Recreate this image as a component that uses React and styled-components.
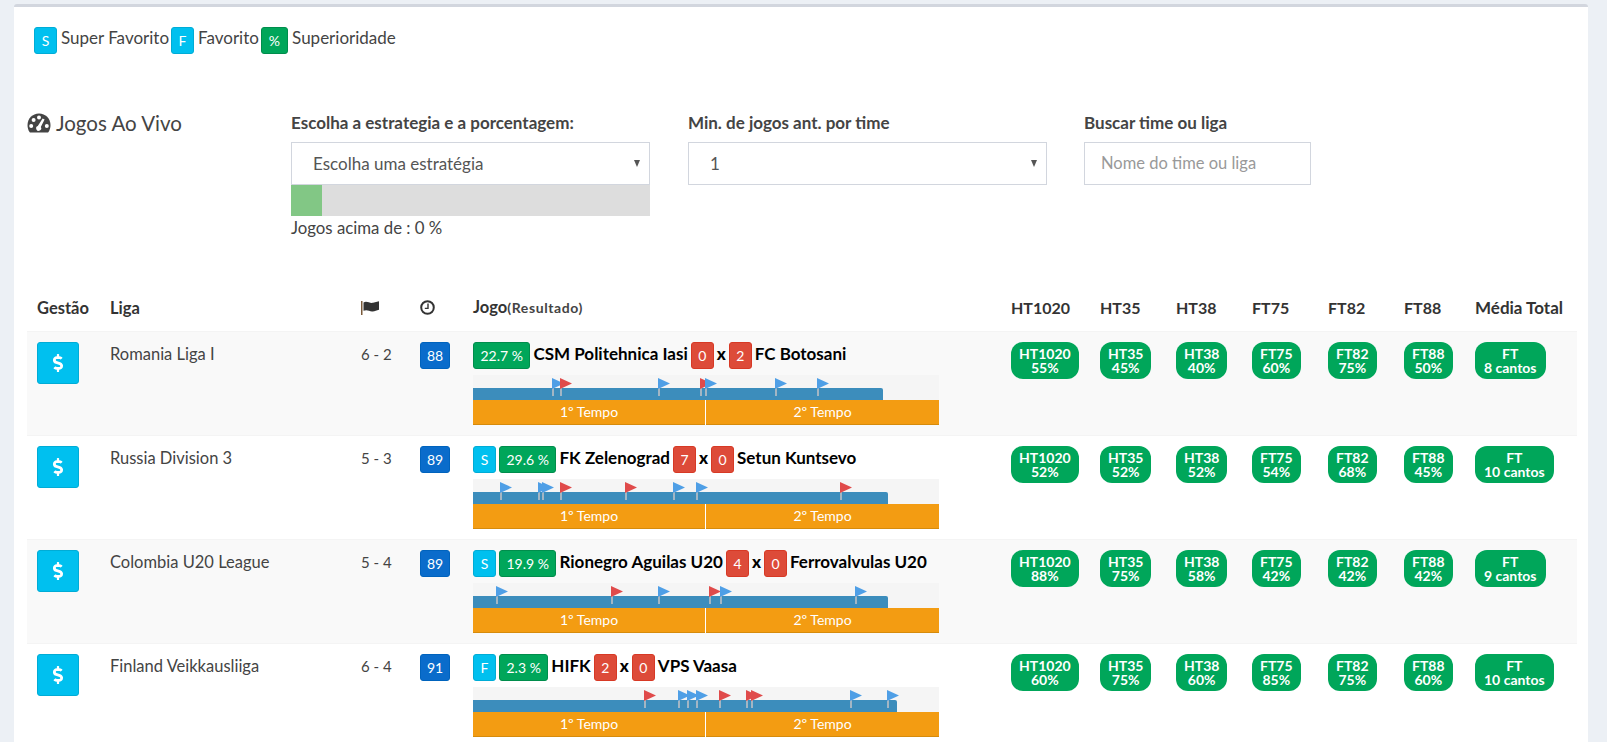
import React from 'react'
import styled, { createGlobalStyle } from 'styled-components'
import { FaDollarSign } from 'react-icons/fa'

const GlobalStyle = createGlobalStyle`
  html, body {
    margin: 0;
    height: 742px;
    overflow: hidden;
    background: #ecf0f5;
    font-family: Lato, "Liberation Sans", sans-serif;
    font-size: 16px;
    color: #333;
  }
`

const green = '#00a65a'
const cyan = '#00c0ef'
const red = '#dd4b39'
const columns = '73px 251px 59px 53px 538px 89px 76px 76px 76px 76px 71px 112px'

const Panel = styled.div`
  margin: 4px 19px 0 14px;
  height: 738px;
  box-sizing: border-box;
  background: #fff;
  border-top: 3px solid #d2d6de;
  border-radius: 3px 3px 0 0;
  padding: 20px 11px 0 13px;
  overflow: hidden;
`

const Legend = styled.div`
  display: flex;
  align-items: flex-start;
  height: 27px;
  padding-left: 7px;
  font-size: 17px;
  line-height: 22px;
  color: #444;
`

const LegendText = styled.span`
  margin: 0 2px 0 4px;
`

const Tag = styled.span`
  display: inline-block;
  box-sizing: border-box;
  height: 27px;
  min-width: 23px;
  padding: 0 ${props => props.$pad || 6}px;
  border-radius: 3px;
  border: 1px solid ${props => props.$color === 'green' ? '#008d4c' : props.$color === 'red' ? '#d73925' : '#00acd6'};
  background: ${props => props.$color === 'green' ? green : props.$color === 'red' ? red : cyan};
  color: #fff;
  font-size: 14px;
  font-weight: 400;
  line-height: 25px;
  text-align: center;
  white-space: nowrap;
`

const Filters = styled.div`
  display: flex;
  margin-top: 57px;
  height: 180px;
`

const Title = styled.h3`
  display: flex;
  align-items: center;
  gap: 5px;
  width: 264px;
  height: 24px;
  margin: 0;
  font-size: 20.5px;
  font-weight: 400;
  color: #444;
`

const Field = styled.div`
  width: ${props => props.$width}px;
  margin-right: ${props => props.$gap || 37}px;
`

const Label = styled.label`
  display: block;
  height: 24px;
  margin-bottom: 7px;
  font-size: 17px;
  font-weight: 700;
  line-height: 24px;
  color: #444;
  white-space: nowrap;
`

const SelectBox = styled.div`
  position: relative;
  box-sizing: border-box;
  height: 43px;
  padding: 0 21px;
  border: 1px solid #d2d6de;
  font-size: 17px;
  line-height: 41px;
  color: #555;
  &::after {
    content: '';
    position: absolute;
    right: 9px;
    top: 17px;
    border-left: 3.5px solid transparent;
    border-right: 3.5px solid transparent;
    border-top: 7px solid #555;
  }
`

const Input = styled.div`
  box-sizing: border-box;
  height: 43px;
  padding: 0 16px;
  border: 1px solid #d2d6de;
  font-size: 16.5px;
  line-height: 41px;
  color: #999;
`

const Progress = styled.div`
  height: 31px;
  background: #ddd;
`

const ProgressFill = styled.div`
  height: 100%;
  background: #82c785;
`

const Hint = styled.div`
  font-size: 16.8px;
  line-height: 24px;
  color: #444;
`

const Row = styled.div`
  display: grid;
  grid-template-columns: ${columns};
  box-sizing: border-box;
  height: 104px;
  padding-top: 10px;
  border-top: 1px solid #f4f4f4;
  background: ${props => props.$striped ? '#f9f9f9' : '#fff'};
`

const HeadRow = styled.div`
  display: grid;
  grid-template-columns: ${columns};
  box-sizing: border-box;
  height: 40px;
  padding-bottom: 7px;
  align-items: center;
  font-weight: 700;
  color: #333;
`

const HeadCell = styled.div`
  padding-left: 10px;
  white-space: nowrap;
  font-size: ${props => props.$size || 16.5}px;
  line-height: 22px;
  small { font-size: 14px; letter-spacing: 0.6px; color: #444; }
  svg { display: block; }
`

const Cell = styled.div`
  padding-left: 10px;
  min-width: 0;
`

const PlainCell = styled(Cell)`
  padding-top: 1px;
  font-size: ${props => props.$size || 16.5}px;
  line-height: 22px;
  color: #444;
`

const MoneyButton = styled.div`
  display: flex;
  align-items: center;
  justify-content: center;
  box-sizing: border-box;
  width: 42px;
  height: 42px;
  border-radius: 3px;
  border: 1px solid #00acd6;
  background: ${cyan};
  color: #fff;
  font-size: 18px;
`

const Minute = styled.div`
  box-sizing: border-box;
  width: 30px;
  height: 27px;
  border-radius: 3px;
  border: 1px solid #0063bd;
  background: #0a6ccb;
  color: #fff;
  font-size: 14px;
  line-height: 25px;
  text-align: center;
`

const Match = styled.div`
  display: flex;
  align-items: flex-start;
  gap: 3px;
  height: 27px;
  font-size: 17px;
  font-weight: 700;
  line-height: 24px;
  color: #000;
  white-space: nowrap;
`

const Timeline = styled.div`
  position: relative;
  width: 466px;
  margin-top: 6px;
  padding-top: 13px;
  background: #f5f5f5;
`

const Played = styled.div`
  height: 12px;
  border-radius: 0 2px 0 0;
  background: #3c8dbc;
`

const Flag = styled.svg`
  position: absolute;
  top: 3px;
  margin-left: -1px;
  overflow: visible;
`

const Halves = styled.div`
  display: grid;
  grid-template-columns: 232px 1px 233px;
  background: #fff;
`

const Half = styled.div`
  height: 25px;
  box-sizing: border-box;
  border-bottom: 1px solid #d68b0c;
  background: #f39c12;
  color: #fff;
  font-size: 14px;
  line-height: 24px;
  text-align: center;
`

const Pill = styled.div`
  display: inline-block;
  padding: 5px ${props => props.$pad || 8}px 4px;
  border-radius: 12px;
  background: ${green};
  color: #fff;
  font-size: 14px;
  font-weight: 700;
  line-height: 14px;
  text-align: center;
  white-space: nowrap;
`

const heads = ['HT1020', 'HT35', 'HT38', 'FT75', 'FT82', 'FT88']

const games = [
  {
    liga: 'Romania Liga I', corners: '6 - 2', minute: 88, pct: '22.7 %',
    home: 'CSM Politehnica Iasi', away: 'FC Botosani', score: [0, 2], played: 410,
    flags: [[80, 'b'], [88, 'r'], [186, 'b'], [228, 'r'], [233, 'b'], [303, 'b'], [345, 'b']],
    odds: ['55%', '45%', '40%', '60%', '75%', '50%'], total: '8 cantos',
  },
  {
    liga: 'Russia Division 3', corners: '5 - 3', minute: 89, pct: '29.6 %', tag: 'S',
    home: 'FK Zelenograd', away: 'Setun Kuntsevo', score: [7, 0], played: 415,
    flags: [[28, 'b'], [66, 'b'], [70, 'b'], [88, 'r'], [153, 'r'], [201, 'b'], [224, 'b'], [368, 'r']],
    odds: ['52%', '52%', '52%', '54%', '68%', '45%'], total: '10 cantos',
  },
  {
    liga: 'Colombia U20 League', corners: '5 - 4', minute: 89, pct: '19.9 %', tag: 'S',
    home: 'Rionegro Aguilas U20', away: 'Ferrovalvulas U20', score: [4, 0], played: 415,
    flags: [[24, 'b'], [139, 'r'], [186, 'b'], [237, 'r'], [248, 'b'], [383, 'b']],
    odds: ['88%', '75%', '58%', '42%', '42%', '42%'], total: '9 cantos',
  },
  {
    liga: 'Finland Veikkausliiga', corners: '6 - 4', minute: 91, pct: '2.3 %', tag: 'F',
    home: 'HIFK', away: 'VPS Vaasa', score: [2, 0], played: 424,
    flags: [[172, 'r'], [206, 'b'], [215, 'b'], [224, 'b'], [247, 'r'], [274, 'r'], [279, 'r'], [378, 'b'], [415, 'b']],
    odds: ['60%', '75%', '60%', '85%', '75%', '60%'], total: '10 cantos',
  },
]

// font awesome 4 look, the packaged FA5 ones are too thin
const GaugeIcon = () => (
  <svg width="24" height="20" viewBox="0 0 24 20">
    <path d="M12 0.5 C5.5 0.5 0.5 5.5 0.5 12 C0.5 14.6 1.2 17 2.5 19 Q2.9 19.5 3.6 19.5 L20.4 19.5 Q21.1 19.5 21.5 19 C22.8 17 23.5 14.6 23.5 12 C23.5 5.5 18.5 0.5 12 0.5 Z" fill="#444" />
    <circle cx="4.2" cy="13" r="2" fill="#fff" />
    <circle cx="6.6" cy="7" r="2" fill="#fff" />
    <circle cx="12" cy="4.6" r="2" fill="#fff" />
    <circle cx="19.8" cy="13" r="2" fill="#fff" />
    <path d="M15.6 5.6 L17.6 6.4 L13.8 14 A2.5 2.5 0 1 1 10.8 13 Z" fill="#fff" />
  </svg>
)

const HeadFlag = () => (
  <svg width="19" height="14" viewBox="0 0 19 14">
    <rect x="0" y="0" width="1.5" height="14" fill="#7a5a3a" />
    <path d="M2.5 1.5 C6 -0.5 8.5 2.6 12 1.8 C14 1.3 16 0.6 18 0.2 L18 8.8 C15.5 9.6 13.5 10.6 11 10.4 C8 10.2 6 8.2 2.5 9.8 Z" fill="#333" />
  </svg>
)

const HeadClock = () => (
  <svg width="15" height="15" viewBox="0 0 15 15">
    <circle cx="7.5" cy="7.5" r="6.3" fill="none" stroke="#333" strokeWidth="2" />
    <path d="M8 3.6 V8.4 H4.8" fill="none" stroke="#333" strokeWidth="1.4" />
  </svg>
)

const PitchFlag = ({ left, color }) => (
  <Flag width="12" height="18" viewBox="0 0 12 18" style={{ left }}>
    <rect x="0" y="10" width="2" height="8" fill="#a3b6c4" />
    <path d="M0 0 L12 5.5 L0 11 Z" fill={color === 'r' ? '#e04b4b' : '#4f9fe6'} />
  </Flag>
)

const GameRow = ({ game, striped }) => (
  <Row $striped={striped}>
    <Cell><MoneyButton><FaDollarSign /></MoneyButton></Cell>
    <PlainCell>{game.liga}</PlainCell>
    <PlainCell $size={15}>{game.corners}</PlainCell>
    <Cell><Minute>{game.minute}</Minute></Cell>
    <Cell>
      <Match>
        {game.tag && <Tag>{game.tag}</Tag>}
        <Tag $color="green" $pad={6.5}>{game.pct}</Tag>
        {game.home}
        <Tag $color="red">{game.score[0]}</Tag>
        <b>x</b>
        <Tag $color="red">{game.score[1]}</Tag>
        {game.away}
      </Match>
      <Timeline>
        <Played style={{ width: game.played }} />
        {game.flags.map(([left, color], i) => <PitchFlag key={i} left={left} color={color} />)}
        <Halves>
          <Half>1º Tempo</Half>
          <span />
          <Half>2º Tempo</Half>
        </Halves>
      </Timeline>
    </Cell>
    {game.odds.map((odd, i) => (
      <Cell key={i}>
        <Pill>{heads[i]}<br />{odd}</Pill>
      </Cell>
    ))}
    <Cell><Pill $pad={9}>FT<br />{game.total}</Pill></Cell>
  </Row>
)

export default function App() {
  return (
    <>
      <GlobalStyle />
      <Panel>
        <Legend>
          <Tag>S</Tag><LegendText>Super Favorito</LegendText>
          <Tag>F</Tag><LegendText>Favorito</LegendText>
          <Tag $color="green" $pad={7}>%</Tag><LegendText>Superioridade</LegendText>
        </Legend>
        <Filters>
          <Title><GaugeIcon />Jogos Ao Vivo</Title>
          <Field $width={359} $gap={38}>
            <Label>Escolha a estrategia e a porcentagem:</Label>
            <SelectBox>Escolha uma estratégia</SelectBox>
            <Progress><ProgressFill style={{ width: '8.6%' }} /></Progress>
            <Hint>Jogos acima de : 0 %</Hint>
          </Field>
          <Field $width={359}>
            <Label>Min. de jogos ant. por time</Label>
            <SelectBox>1</SelectBox>
          </Field>
          <Field $width={227}>
            <Label>Buscar time ou liga</Label>
            <Input>Nome do time ou liga</Input>
          </Field>
        </Filters>
        <HeadRow>
          <HeadCell>Gestão</HeadCell>
          <HeadCell>Liga</HeadCell>
          <HeadCell><HeadFlag /></HeadCell>
          <HeadCell><HeadClock /></HeadCell>
          <HeadCell>Jogo<small>(Resultado)</small></HeadCell>
          {heads.map(h => <HeadCell key={h} $size={16}>{h}</HeadCell>)}
          <HeadCell $size={17}>Média Total</HeadCell>
        </HeadRow>
        {games.map((game, i) => <GameRow key={game.liga} game={game} striped={i % 2 === 0} />)}
      </Panel>
    </>
  )
}
